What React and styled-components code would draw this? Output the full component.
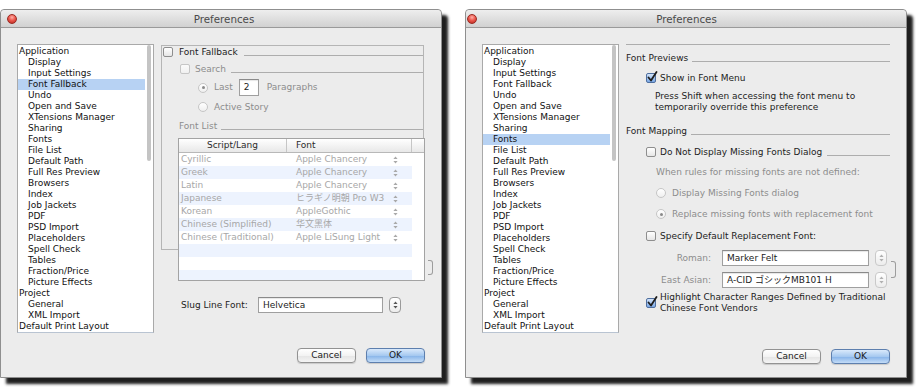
import React from 'react';
import styled, { createGlobalStyle } from 'styled-components';

const GlobalStyle = createGlobalStyle`
  html, body {
    margin: 0;
    padding: 0;
    background: #ffffff;
  }
  body {
    font-family: "DejaVu Sans", "Noto Sans CJK JP", sans-serif;
    font-size: 9px;
    color: #1c1c1c;
  }
  * { box-sizing: border-box; }
`;

const Page = styled.div`
  display: flex;
  gap: 23px;
  padding-top: 9px;
  width: 919px;
  height: 391px;
  overflow: hidden;
`;

const Window = styled.div`
  width: 442px;
  height: 369px;
  flex-shrink: 0;
  display: flex;
  flex-direction: column;
  background: #ececec;
  border: 1px solid #8f8f8f;
  border-radius: 4px 4px 0 0;
  box-shadow: 6px 6px 3px rgba(0, 0, 0, 0.88);
`;

const TitleBar = styled.div`
  height: 18px;
  flex-shrink: 0;
  display: grid;
  grid-template-columns: 1fr auto 1fr;
  align-items: center;
  padding-left: ${p => p.$closeOffset}px;
  background: linear-gradient(#eeeeee, #d1d1d1);
  border-bottom: 1px solid #9a9a9a;
  border-radius: 4px 4px 0 0;
`;

const CloseButton = styled.span`
  width: 10px;
  height: 10px;
  border-radius: 50%;
  background: radial-gradient(circle at 50% 30%, #ffb0a8 0%, #ec5a4f 45%, #b8241c 100%);
  border: 1px solid #9a2a22;
`;

const Title = styled.div`
  font-size: 10.3px;
  color: #4a4a4a;
  line-height: 18px;
`;

const WindowBody = styled.div`
  display: flex;
  gap: 7px;
  height: 305px;
  padding: 16px 0 0 16px;
`;

const Sidebar = styled.div`
  width: 137px;
  height: 289px;
  display: flex;
  background: #ffffff;
  border: 1px solid #a9a9a9;
  border-bottom-color: #b9c4d2;
`;

const SidebarItems = styled.div`
  flex: 1;
  padding-top: 1px;
`;

const SidebarItem = styled.div`
  height: 11px;
  line-height: 11px;
  white-space: nowrap;
  padding-left: ${p => (p.$child ? 10 : 1)}px;
  background: ${p => (p.$selected ? '#b7d2f3' : 'transparent')};
  color: #111;
`;

const ScrollTrack = styled.div`
  width: 8px;
  padding: 0 1px 0 2px;
`;

const ScrollThumb = styled.div`
  width: 4px;
  height: 116px;
  border-radius: 3px;
  background: #c4c4c4;
`;

const Panel = styled.div`
  width: 264px;
  display: flex;
  flex-direction: column;
`;

const Footer = styled.div`
  display: flex;
  justify-content: flex-end;
  gap: 10px;
  padding-right: 16px;
  margin-top: ${p => p.$mt}px;
`;

const Button = styled.div`
  width: 59px;
  height: 15px;
  line-height: 13px;
  text-align: center;
  color: #1a1a1a;
  border-radius: 4px;
  border: 1px solid ${p => (p.$primary ? '#5d7fae' : '#929292')};
  background: ${p =>
    p.$primary
      ? 'linear-gradient(#d9e9fb 0%, #a6c9f0 50%, #8ab6ea 55%, #c3dcf7 100%)'
      : 'linear-gradient(#ffffff 0%, #f3f3f3 50%, #e6e6e6 55%, #f4f4f4 100%)'};
  box-shadow: 0 1px 1px rgba(0, 0, 0, 0.15);
`;

const GroupBox = styled.div`
  width: 263px;
  height: 205px;
  margin-top: 1px;
  border: 1px solid #b5b5b5;
  padding-left: 1px;
`;

const Row = styled.div`
  display: flex;
  align-items: center;
  gap: ${p => (p.$gap !== undefined ? p.$gap : 5)}px;
  height: ${p => p.$h || 12}px;
  margin-top: ${p => p.$mt || 0}px;
  padding-left: ${p => p.$indent || 0}px;
  white-space: nowrap;
`;

const Text = styled.span`
  color: ${p => (p.$muted ? '#8c8c8c' : '#1c1c1c')};
  line-height: 11px;
  margin-left: ${p => p.$ml || 0}px;
`;

const Rule = styled.div`
  flex: 1;
  height: 1px;
  align-self: flex-end;
  margin: 0 0 2px ${p => p.$gapLeft || 0}px;
  background: #adadad;
`;

const TopRule = styled.div`
  height: 1px;
  background: #adadad;
`;

const Note = styled.div`
  margin-top: ${p => p.$mt}px;
  padding-left: ${p => p.$indent}px;
  line-height: 11px;
  white-space: nowrap;
  color: #1c1c1c;
`;

const Spacer = styled.span`
  width: ${p => p.$w}px;
  flex-shrink: 0;
`;

const CheckBoxFrame = styled.span`
  position: relative;
  width: 10px;
  height: 10px;
  flex-shrink: 0;
  border-radius: 2px;
  border: 1px solid ${p => (p.$disabled ? '#c6c6c6' : p.$checked ? '#4f6f9f' : '#8e8e8e')};
  background: ${p =>
    p.$checked
      ? 'linear-gradient(#d3e4fa, #7aa8e6)'
      : p.$disabled
      ? 'linear-gradient(#fbfbfb, #f0f0f0)'
      : 'linear-gradient(#ffffff, #e6e6e6)'};
`;

const CheckMark = styled.svg`
  position: absolute;
  left: 0;
  top: -3px;
`;

const CheckBox = ({ checked, disabled }) => (
  <CheckBoxFrame $checked={checked} $disabled={disabled}>
    {checked && (
      <CheckMark width="11" height="12" viewBox="0 0 11 12">
        <path d="M1.5 6.5 L4 9.5 L9.5 1" fill="none" stroke="#1d1d1d" strokeWidth="1.8" strokeLinecap="round" strokeLinejoin="round" />
      </CheckMark>
    )}
  </CheckBoxFrame>
);

const RadioDot = styled.span`
  width: 10px;
  height: 10px;
  flex-shrink: 0;
  border-radius: 50%;
  border: 1px solid #c6c6c6;
  background: linear-gradient(#ffffff, #efefef);
  display: flex;
  align-items: center;
  justify-content: center;
  &::after {
    content: '';
    width: 3px;
    height: 3px;
    border-radius: 50%;
    background: #8a8a8a;
    display: ${p => (p.$on ? 'block' : 'none')};
  }
`;

const TextField = styled.div`
  width: ${p => p.$w}px;
  height: ${p => p.$h || 16}px;
  line-height: ${p => (p.$h || 16) - 2}px;
  padding-left: 4px;
  flex-shrink: 0;
  background: #ffffff;
  border: 1px solid #9f9f9f;
  border-top-color: #8a8a8a;
  box-shadow: inset 0 1px 1px rgba(0, 0, 0, 0.1);
  color: #1c1c1c;
  white-space: nowrap;
  overflow: hidden;
`;

const StepperBox = styled.span`
  width: 12px;
  height: 16px;
  flex-shrink: 0;
  display: flex;
  align-items: center;
  justify-content: center;
  border-radius: 4px;
  border: 1px solid ${p => (p.$disabled ? '#c9c9c9' : '#9a9a9a')};
  background: linear-gradient(#ffffff, #ececec);
`;

const Arrows = ({ color }) => (
  <svg width="5" height="8" viewBox="0 0 5 8">
    <path d="M2.5 0.5 L4.6 3 H0.4 Z M0.4 5 H4.6 L2.5 7.5 Z" fill={color} />
  </svg>
);

const Stepper = ({ disabled }) => (
  <StepperBox $disabled={disabled}>
    <Arrows color={disabled ? '#b0b0b0' : '#555555'} />
  </StepperBox>
);

const TableArea = styled.div`
  display: flex;
  align-items: flex-end;
  margin-top: 6px;
  padding-left: 15px;
`;

const TableFrame = styled.div`
  width: 247px;
  height: 143px;
  flex-shrink: 0;
  overflow: hidden;
  background: #ffffff;
  border: 1px solid #a3a3a3;
`;

const TableHead = styled.div`
  display: grid;
  grid-template-columns: 108px 125px 1fr;
  height: 14px;
  background: linear-gradient(#ffffff, #e8e8e8);
  border-bottom: 1px solid #b8b8b8;
`;

const HeadCell = styled.div`
  line-height: 13px;
  text-align: ${p => (p.$center ? 'center' : 'left')};
  padding-left: ${p => (p.$center ? 0 : 9)}px;
  border-right: ${p => (p.$last ? 'none' : '1px solid #c6c6c6')};
  color: #2a2a2a;
`;

const TableRow = styled.div`
  display: grid;
  grid-template-columns: 108px 125px 1fr;
  height: 13px;
  line-height: 13px;
  color: #a7a7a7;
  white-space: nowrap;
`;

const Cell = styled.div`
  display: flex;
  align-items: center;
  justify-content: space-between;
  padding-left: ${p => p.$pad}px;
  padding-right: ${p => (p.$stepper ? 14 : 0)}px;
  background: ${p => (p.$alt ? '#edf3fe' : '#ffffff')};
  overflow: hidden;
`;

const Bracket = styled.div`
  width: 5px;
  height: ${p => p.$h}px;
  flex-shrink: 0;
  margin-left: ${p => p.$ml}px;
  margin-bottom: ${p => p.$mb || 0}px;
  border: 1px solid #9d9d9d;
  border-left: none;
  border-radius: 0 3px 3px 0;
`;

const SlugLabel = styled.span`
  width: 77px;
  flex-shrink: 0;
`;

const MappingGroup = styled.div`
  display: flex;
  align-items: center;
  margin-top: ${p => p.$mt}px;
`;

const MappingRows = styled.div`
  display: flex;
  flex-direction: column;
  gap: 6px;
`;

const FieldLabel = styled.span`
  width: 85px;
  text-align: right;
  color: #8c8c8c;
  flex-shrink: 0;
`;

const HighlightRow = styled.div`
  display: flex;
  align-items: center;
  gap: 4px;
  margin-top: ${p => p.$mt}px;
  padding-left: 20px;
  white-space: nowrap;
  line-height: 11px;
`;

const sidebarItems = [
  ['Application', false],
  ['Display', true],
  ['Input Settings', true],
  ['Font Fallback', true],
  ['Undo', true],
  ['Open and Save', true],
  ['XTensions Manager', true],
  ['Sharing', true],
  ['Fonts', true],
  ['File List', true],
  ['Default Path', true],
  ['Full Res Preview', true],
  ['Browsers', true],
  ['Index', true],
  ['Job Jackets', true],
  ['PDF', true],
  ['PSD Import', true],
  ['Placeholders', true],
  ['Spell Check', true],
  ['Tables', true],
  ['Fraction/Price', true],
  ['Picture Effects', true],
  ['Project', false],
  ['General', true],
  ['XML Import', true],
  ['Default Print Layout', false],
];

const fallbackRows = [
  ['Cyrillic', 'Apple Chancery'],
  ['Greek', 'Apple Chancery'],
  ['Latin', 'Apple Chancery'],
  ['Japanese', 'ヒラギノ明朝 Pro W3'],
  ['Korean', 'AppleGothic'],
  ['Chinese (Simplified)', '华文黑体'],
  ['Chinese (Traditional)', 'Apple LiSung Light'],
  null,
  null,
  null,
  null,
];

const PrefsWindow = ({ selected, closeOffset, footerGap, children }) => (
  <Window>
    <TitleBar $closeOffset={closeOffset}>
      <CloseButton />
      <Title>Preferences</Title>
      <span />
    </TitleBar>
    <WindowBody>
      <Sidebar>
        <SidebarItems>
          {sidebarItems.map(([name, child]) => (
            <SidebarItem key={name} $child={child} $selected={name === selected}>
              {name}
            </SidebarItem>
          ))}
        </SidebarItems>
        <ScrollTrack>
          <ScrollThumb />
        </ScrollTrack>
      </Sidebar>
      <Panel>{children}</Panel>
    </WindowBody>
    <Footer $mt={footerGap}>
      <Button>Cancel</Button>
      <Button $primary>OK</Button>
    </Footer>
  </Window>
);

const FontFallbackPanel = () => (
  <>
    <GroupBox>
      <Row $gap={6}>
        <CheckBox />
        <Text>Font Fallback</Text>
        <Rule />
      </Row>
      <Row $mt={5} $indent={17}>
        <CheckBox disabled />
        <Text $muted>Search</Text>
        <Rule />
      </Row>
      <Row $mt={4} $h={17} $indent={35} $gap={6}>
        <RadioDot $on />
        <Text $muted>Last</Text>
        <TextField $w={20} $h={17}>2</TextField>
        <Text $muted $ml={2}>Paragraphs</Text>
      </Row>
      <Row $mt={5} $indent={35} $gap={6}>
        <RadioDot />
        <Text $muted>Active Story</Text>
      </Row>
      <Row $mt={7} $indent={16} $gap={4}>
        <Text $muted>Font List</Text>
        <Rule />
      </Row>
      <TableArea>
        <TableFrame>
          <TableHead>
            <HeadCell $center>Script/Lang</HeadCell>
            <HeadCell>Font</HeadCell>
            <HeadCell $last />
          </TableHead>
          {fallbackRows.map((row, i) => (
            <TableRow key={i}>
              <Cell $pad={2} $alt={i % 2 === 1}>{row ? row[0] : ''}</Cell>
              <Cell $pad={9} $alt={i % 2 === 1} $stepper>
                {row && (
                  <>
                    <span>{row[1]}</span>
                    <Arrows color="#a9a9a9" />
                  </>
                )}
              </Cell>
              <Cell $pad={0} />
            </TableRow>
          ))}
        </TableFrame>
        <Bracket $h={15} $ml={3} $mb={6} />
      </TableArea>
    </GroupBox>
    <Row $mt={47} $h={16} $indent={20} $gap={0}>
      <SlugLabel>Slug Line Font:</SlugLabel>
      <TextField $w={125}>Helvetica</TextField>
      <Spacer $w={6} />
      <Stepper />
    </Row>
  </>
);

const FontsPanel = () => (
  <>
    <TopRule />
    <Row $mt={7} $gap={4}>
      <Text>Font Previews</Text>
      <Rule />
    </Row>
    <Row $mt={8} $indent={20} $gap={4}>
      <CheckBox checked />
      <Text>Show in Font Menu</Text>
    </Row>
    <Note $mt={7} $indent={29}>
      Press Shift when accessing the font menu to
      <br />
      temporarily override this preference
    </Note>
    <Row $mt={12} $gap={4}>
      <Text>Font Mapping</Text>
      <Rule />
    </Row>
    <Row $mt={9} $indent={20} $gap={4}>
      <CheckBox />
      <Text>Do Not Display Missing Fonts Dialog</Text>
      <Rule $gapLeft={1} />
    </Row>
    <Row $mt={8} $indent={30}>
      <Text $muted>When rules for missing fonts are not defined:</Text>
    </Row>
    <Row $mt={9} $indent={30} $gap={6}>
      <RadioDot />
      <Text $muted>Display Missing Fonts dialog</Text>
    </Row>
    <Row $mt={9} $indent={30} $gap={6}>
      <RadioDot $on />
      <Text $muted>Replace missing fonts with replacement font</Text>
    </Row>
    <Row $mt={10} $indent={20} $gap={4}>
      <CheckBox />
      <Text>Specify Default Replacement Font:</Text>
    </Row>
    <MappingGroup $mt={8}>
      <MappingRows>
        <Row $h={16} $gap={0}>
          <FieldLabel>Roman:</FieldLabel>
          <Spacer $w={11} />
          <TextField $w={147}>Marker Felt</TextField>
          <Spacer $w={6} />
          <Stepper disabled />
        </Row>
        <Row $h={16} $gap={0}>
          <FieldLabel>East Asian:</FieldLabel>
          <Spacer $w={11} />
          <TextField $w={147}>A-CID ゴシックMB101 H</TextField>
          <Spacer $w={6} />
          <Stepper disabled />
        </Row>
      </MappingRows>
      <Bracket $h={17} $ml={4} />
    </MappingGroup>
    <HighlightRow $mt={4}>
      <CheckBox checked />
      <span>
        Highlight Character Ranges Defined by Traditional
        <br />
        Chinese Font Vendors
      </span>
    </HighlightRow>
  </>
);

export default function App() {
  return (
    <>
      <GlobalStyle />
      <Page>
        <PrefsWindow selected="Font Fallback" closeOffset={6} footerGap={15}>
          <FontFallbackPanel />
        </PrefsWindow>
        <PrefsWindow selected="Fonts" closeOffset={1} footerGap={16}>
          <FontsPanel />
        </PrefsWindow>
      </Page>
    </>
  );
}
